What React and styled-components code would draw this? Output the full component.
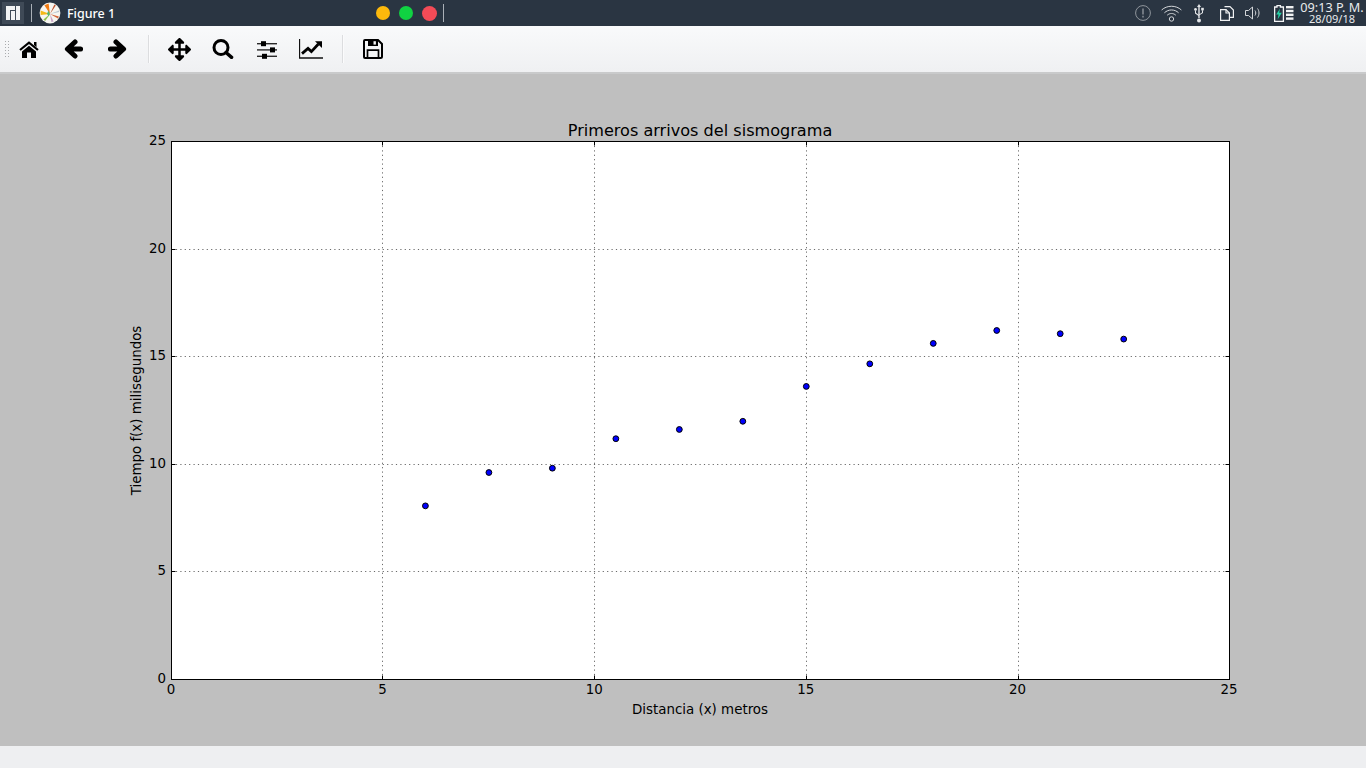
import styled, { createGlobalStyle } from "styled-components";
import { FaArrowsAlt } from "react-icons/fa";

const GlobalStyle = createGlobalStyle`
  html, body {
    margin: 0;
    padding: 0;
    overflow: hidden;
  }
`;

const Page = styled.div`
  width: 1366px;
  height: 768px;
  display: flex;
  flex-direction: column;
  background: #eeeff1;
  font-family: "Noto Sans", sans-serif;
`;

const TopBar = styled.header`
  height: 26px;
  flex: none;
  display: flex;
  align-items: center;
  background: #2a3542;
  color: #fff;
`;

const MenuTile = styled.div`
  width: 22px;
  height: 22px;
  margin-left: 2px;
  background: #3f4a57;
  display: flex;
  align-items: center;
  justify-content: center;
`;

const BarDivider = styled.span`
  width: 1px;
  height: 18px;
  background: #aab0b7;
  margin-left: ${(p) => p.$left}px;
`;

const AppIconBox = styled.div`
  margin-left: 7px;
  display: flex;
`;

const AppTitle = styled.div`
  width: 309px;
  margin-left: 6px;
  font-size: 12.5px;
  font-weight: 500;
  color: #fff;
`;

const WindowControls = styled.div`
  display: flex;
  align-items: center;
  gap: 9px;
`;

const WindowDot = styled.span`
  width: ${(p) => p.$size}px;
  height: ${(p) => p.$size}px;
  border-radius: 50%;
  background: ${(p) => p.$color};
`;

const Tray = styled.div`
  margin-left: auto;
  display: flex;
  align-items: center;
  height: 100%;
`;

const TraySlot = styled.div`
  width: ${(p) => p.$w}px;
  display: flex;
  justify-content: center;
  align-items: center;
`;

const Clock = styled.div`
  width: 64px;
  margin-right: 2px;
  text-align: center;
  white-space: nowrap;
  color: #e8eaec;
  font-size: 12.7px;
  line-height: 11px;
  & small {
    display: block;
    font-size: 11px;
    line-height: 11px;
  }
`;

const Toolbar = styled.div`
  height: 46px;
  flex: none;
  display: flex;
  align-items: center;
  background: linear-gradient(#f9fafb, #eff0f2);
  border-bottom: 2px solid #c9cacb;
`;

const Grip = styled.div`
  width: 4px;
  height: 16px;
  margin-left: 5px;
  margin-right: -2px;
  margin-top: -1px;
  background-image: radial-gradient(circle at 0.5px 0.5px, #a9abad 0.7px, transparent 0.8px);
  background-size: 3px 3px;
`;

const ToolButton = styled.div`
  width: 44px;
  height: 46px;
  display: flex;
  align-items: center;
  justify-content: center;
  color: #000;
  font-size: 23px;
`;

const ToolSeparator = styled.span`
  width: 2px;
  height: 28px;
  margin: 0 7px 0 9px;
  background: #dcdddf;
  border-right: 1px solid #fbfbfc;
  box-sizing: border-box;
`;

const Canvas = styled.main`
  height: 672px;
  flex: none;
  background: #bfbfbf;
`;

const Footer = styled.footer`
  flex: 1;
  background: #eeeff1;
`;

const ChartSvg = styled.svg`
  display: block;
  width: 1366px;
  height: 672px;
`;

const ChartText = styled.text`
  font-family: "DejaVu Sans", sans-serif;
  font-size: ${(p) => p.$size || 13.4}px;
  fill: #000;
`;

const X0 = 171.5;
const Y0 = 605.5;
const SX = 42.32;
const SY = 21.52;
const PLOT_TOP = 67.5;
const PLOT_RIGHT = 1229.5;

const TICKS = [0, 5, 10, 15, 20, 25];

// where the grid lines land in the picture, in canvas pixels
const GRID_X = { 5: 382.5, 10: 594.5, 15: 806.5, 20: 1018.5 };
const GRID_Y = { 5: 497.5, 10: 390.5, 15: 282.5, 20: 175.5 };

const POINTS = [
  [6, 8.05], [7.5, 9.6], [9, 9.8], [10.5, 11.17], [12, 11.6], [13.5, 11.98],
  [15, 13.6], [16.5, 14.65], [18, 15.6], [19.5, 16.2], [21, 16.05], [22.5, 15.8],
];

function Chart() {
  const inner = TICKS.slice(1, -1);
  return (
    <ChartSvg viewBox="0 0 1366 672">
      <rect x={X0} y={PLOT_TOP} width={PLOT_RIGHT - X0} height={Y0 - PLOT_TOP} fill="#fff" />
      {inner.map((t) => (
        <g key={t} stroke="#6a6a6a" strokeWidth="1" strokeDasharray="1.2 3.2">
          <line x1={GRID_X[t]} x2={GRID_X[t]} y1={PLOT_TOP} y2={Y0} />
          <line x1={X0} x2={PLOT_RIGHT} y1={GRID_Y[t]} y2={GRID_Y[t]} />
        </g>
      ))}
      {inner.map((t) => (
        <g key={t} stroke="#000" strokeWidth="1">
          <line x1={GRID_X[t]} x2={GRID_X[t]} y1={Y0} y2={Y0 - 4} />
          <line x1={GRID_X[t]} x2={GRID_X[t]} y1={PLOT_TOP} y2={PLOT_TOP + 4} />
          <line x1={X0} x2={X0 + 4} y1={GRID_Y[t]} y2={GRID_Y[t]} />
          <line x1={PLOT_RIGHT} x2={PLOT_RIGHT - 4} y1={GRID_Y[t]} y2={GRID_Y[t]} />
        </g>
      ))}
      <rect x={X0} y={PLOT_TOP} width={PLOT_RIGHT - X0} height={Y0 - PLOT_TOP} fill="none" stroke="#000" strokeWidth="1" />
      {POINTS.map(([x, y]) => (
        <circle key={x} cx={X0 + x * SX} cy={Y0 - y * SY - 0.4} r="2.9" fill="#0000ff" stroke="#000" strokeWidth="1" />
      ))}
      {TICKS.map((t) => (
        <ChartText key={t} x={X0 + t * SX - 0.5} y={620} textAnchor="middle">{t}</ChartText>
      ))}
      {TICKS.map((t) => (
        <ChartText key={t} x={166} y={Y0 - t * SY + 3.5} textAnchor="end">{t}</ChartText>
      ))}
      <ChartText x={700} y={61.5} textAnchor="middle" $size={16.1}>Primeros arrivos del sismograma</ChartText>
      <ChartText x={700} y={640} textAnchor="middle">Distancia (x) metros</ChartText>
      <ChartText transform="translate(140.5 336.5) rotate(-90)" textAnchor="middle">Tiempo f(x) milisegundos</ChartText>
    </ChartSvg>
  );
}

function HomeIcon() {
  return (
    <svg width="20" height="17" viewBox="0 0 20 17">
      <path d="M15 1 H17.5 V6.2 L15 4 Z" fill="#000" />
      <path d="M1 9 L10 1.6 L19 9" fill="none" stroke="#000" strokeWidth="2.2" />
      <path d="M10 4.8 L17 10.4 V17 H12 V11.6 H8 V17 H3 V10.4 Z" fill="#000" />
    </svg>
  );
}

function ArrowIcon({ flip }) {
  return (
    <svg width="19" height="20" viewBox="0 0 19 20" style={flip ? { transform: "scaleX(-1)" } : undefined}>
      <path
        d="M11 3 L3.4 10 L11 17 M4 10 H16.6"
        fill="none"
        stroke="#000"
        strokeWidth="5"
        strokeLinecap="round"
        strokeLinejoin="round"
      />
    </svg>
  );
}

function SearchIcon() {
  return (
    <svg width="22" height="20" viewBox="0 0 22 20">
      <circle cx="9" cy="8.5" r="7" fill="none" stroke="#000" strokeWidth="3" />
      <path d="M14 13.5 L19.6 18.4" stroke="#000" strokeWidth="3.4" strokeLinecap="round" />
    </svg>
  );
}

function SlidersIcon() {
  return (
    <svg width="20" height="19" viewBox="0 0 20 19">
      <g fill="#2a2a2a">
        <rect x="0" y="3" width="20" height="1.4" />
        <rect x="0" y="9.2" width="20" height="1.4" />
        <rect x="0" y="15.6" width="20" height="1.4" />
      </g>
      <g fill="#000">
        <rect x="4" y="1.2" width="5" height="5" />
        <rect x="13" y="7.4" width="5" height="5" />
        <rect x="5" y="13.8" width="5" height="5" />
      </g>
    </svg>
  );
}

function ChartLineIcon() {
  return (
    <svg width="24" height="20" viewBox="0 0 24 20">
      <path d="M.5 0 V19 H24" fill="none" stroke="#111" strokeWidth="1.3" />
      <path d="M3 14.6 L9 9.4 L12.4 12.6 L19.4 5" fill="none" stroke="#000" strokeWidth="2.8" />
      <path d="M16 2.2 H23 V9 Z" fill="#000" />
    </svg>
  );
}

function SaveIcon() {
  return (
    <svg width="20" height="20" viewBox="0 0 20 20">
      <path d="M2 1 H15 L19 5 V17.5 Q19 19 17.5 19 H2 Q1 19 1 18 V2 Q1 1 2 1 Z" fill="none" stroke="#000" strokeWidth="2" />
      <path d="M5 1 H15 V7 H5 Z" fill="#000" />
      <rect x="10.5" y="2.2" width="2.4" height="3.4" fill="#f4f5f6" />
      <path d="M4.5 18.5 V11.2 H15.5 V18.5" fill="none" stroke="#000" strokeWidth="1.7" />
    </svg>
  );
}

function ManjaroLogo() {
  return (
    <svg width="14" height="14" viewBox="0 0 14 14" fill="#f2f3f4">
      <path d="M0 0 H9 V4 H4 V14 H0 Z" />
      <rect x="5" y="5" width="4" height="9" />
      <rect x="10" y="0" width="4" height="14" />
    </svg>
  );
}

function AppIcon() {
  return (
    <svg width="22" height="22" viewBox="0 0 22 22">
      <circle cx="11" cy="11" r="10.4" fill="#f6f5f0" />
      <path d="M11 12 L5.4 3.2 L9.6 1.6 Z" fill="#f07a12" />
      <path d="M11 12 L1.6 8.6 L1.6 13 Z" fill="#f5b916" />
      <path d="M11 12 L16.8 3.4 L15.4 2.6 Z" fill="#c0542f" />
      <path d="M11 12 L4.4 17.6 L6.2 19 L11 12 Z" fill="#8fc24a" />
      <path d="M11 12 L9.4 8.4 L8 11.8 L9.6 14.6 Z" fill="#55b56a" />
      <path d="M11 12 L12.4 20 L14.6 19.4 Z" fill="#c9a5c9" />
      <path d="M11 12 L19 16.4 L19.8 14.6 Z" fill="#d2663a" />
      <path d="M11 12 L20 8.6 L20.2 10 Z" fill="#b8c8d2" />
    </svg>
  );
}

const trayStroke = { fill: "none", stroke: "#d4d7da", strokeWidth: 1 };

function TrayIcons() {
  return (
    <>
      <TraySlot $w={30}>
        <svg width="16" height="16" viewBox="0 0 16 16" fill="none" stroke="#8f959c">
          <circle cx="8" cy="8" r="7.4" />
          <path d="M8 3.6v5.8M8 10.8v1.6" strokeWidth="1.4" />
        </svg>
      </TraySlot>
      <TraySlot $w={26}>
        <svg width="21" height="18" viewBox="0 0 21 18" {...trayStroke}>
          <path d="M.6 6 C6 1 15 1 20.4 6" />
          <path d="M3.4 8.8 C7.4 5 13.6 5 17.6 8.8" />
          <path d="M6.2 11.2 C8.8 8.9 12.2 8.9 14.8 11.2" />
          <circle cx="10.5" cy="15" r="2.2" />
        </svg>
      </TraySlot>
      <TraySlot $w={30}>
        <svg width="10" height="19" viewBox="0 0 10 19" fill="#e4e6e8">
          <path d="M5 0 L7 3 H5.7 V14 H4.3 V3 H3 Z" />
          <rect x="7.2" y="3.8" width="2.6" height="2.6" />
          <circle cx="1.5" cy="5.4" r="1.4" />
          <path d="M1 6.5 H2 V8.8 L5 11 V12.2 L1 9.4 Z" />
          <path d="M8 6.3 H9 V9 L5 11.6 V10.5 L8 8.6 Z" />
          <circle cx="5" cy="16.4" r="2" />
        </svg>
      </TraySlot>
      <TraySlot $w={26}>
        <svg width="14" height="15" viewBox="0 0 14 15" fill="none" stroke="#f0f1f2" strokeWidth="1.2">
          <path d="M4.5 .6 H10 L13.4 4 V11.4 H9.5" />
          <path d="M.6 3.6 H6 L9.4 7 V14.4 H.6 Z" fill="#2a3542" />
          <path d="M6 3.6 V7 H9.4" />
        </svg>
      </TraySlot>
      <TraySlot $w={27}>
        <svg width="17" height="14" viewBox="0 0 17 14" {...trayStroke}>
          <path d="M.5 4.5 H3.5 L7.5 1 V13 L3.5 9.5 H.5 Z" />
          <path d="M10 4.5 C11 6 11 8 10 9.5" />
          <path d="M12.5 2.5 C14.5 5 14.5 9 12.5 11.5" />
        </svg>
      </TraySlot>
      <TraySlot $w={33}>
        <svg width="20" height="17" viewBox="0 0 20 17">
          <path d="M3 .7 H6.4 V2 H9.4 V16.3 H.6 V2 H3 Z" fill="none" stroke="#f4f5f6" strokeWidth="1.3" />
          <path d="M6 3.4 L2.2 9.6 H4.6 L3.6 14.6 L7.8 7.8 H5.2 Z" fill="#22d3a5" />
          <g fill="#f0f1f2">
            <rect x="12" y="1" width="7.5" height="2.4" />
            <rect x="12" y="4.8" width="7.5" height="2.4" />
            <rect x="12" y="8.6" width="7.5" height="2.4" />
            <rect x="12" y="12.4" width="7.5" height="2.4" />
          </g>
        </svg>
      </TraySlot>
    </>
  );
}

function App() {
  return (
    <Page>
      <GlobalStyle />
      <TopBar>
        <MenuTile><ManjaroLogo /></MenuTile>
        <BarDivider $left={7} />
        <AppIconBox><AppIcon /></AppIconBox>
        <AppTitle>Figure 1</AppTitle>
        <WindowControls>
          <WindowDot $size={14} $color="#fdb90c" />
          <WindowDot $size={14} $color="#10d242" />
          <WindowDot $size={15} $color="#f34b57" />
        </WindowControls>
        <BarDivider $left={6} />
        <Tray>
          <TrayIcons />
          <Clock>09:13 P. M.<small>28/09/18</small></Clock>
        </Tray>
      </TopBar>
      <Toolbar>
        <Grip />
        <ToolButton><HomeIcon /></ToolButton>
        <ToolButton><ArrowIcon /></ToolButton>
        <ToolButton><ArrowIcon flip /></ToolButton>
        <ToolSeparator />
        <ToolButton><FaArrowsAlt /></ToolButton>
        <ToolButton><SearchIcon /></ToolButton>
        <ToolButton><SlidersIcon /></ToolButton>
        <ToolButton><ChartLineIcon /></ToolButton>
        <ToolSeparator />
        <ToolButton><SaveIcon /></ToolButton>
      </Toolbar>
      <Canvas><Chart /></Canvas>
      <Footer />
    </Page>
  );
}

export default App;
